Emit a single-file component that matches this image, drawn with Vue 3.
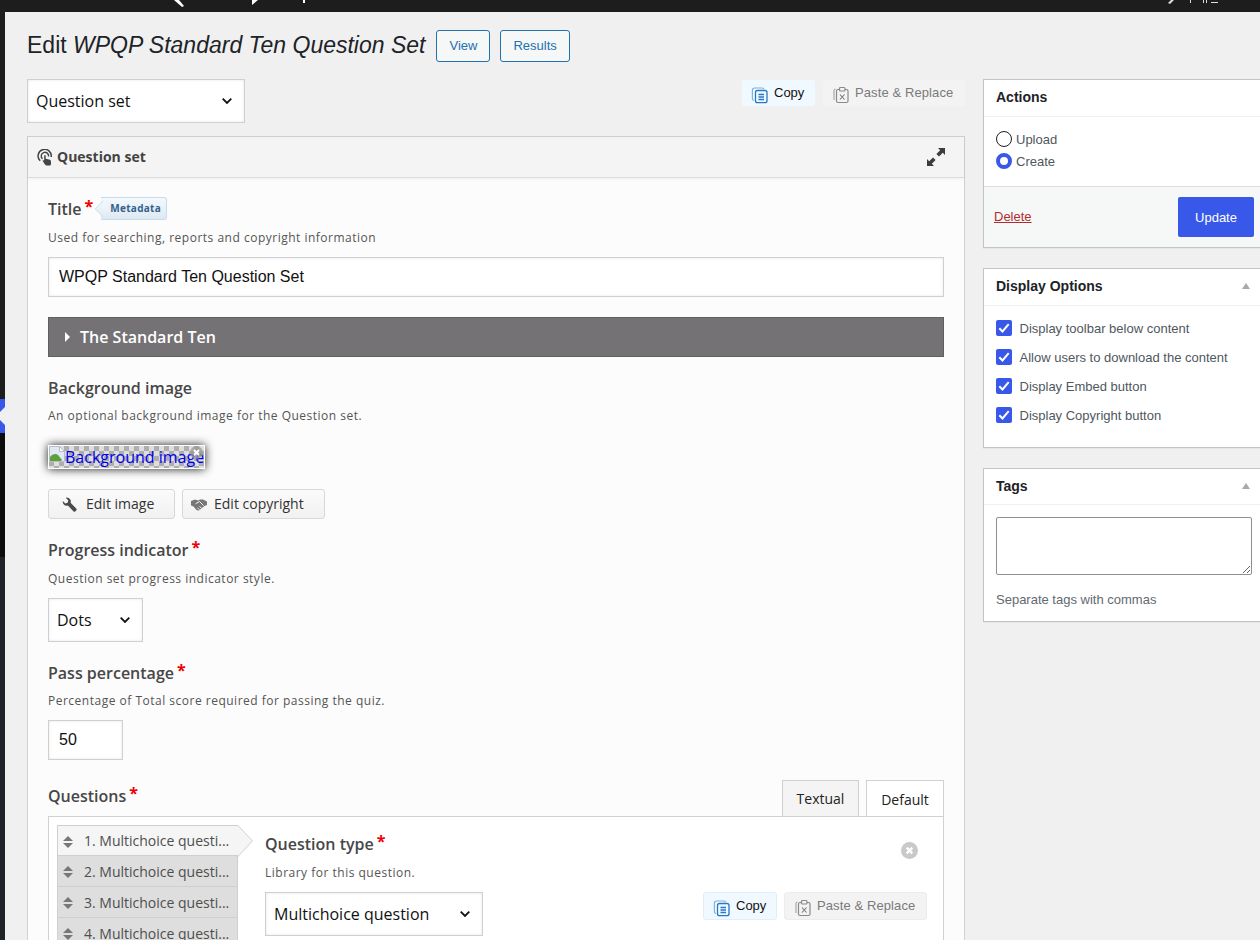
<script setup>
const options = [
  'Display toolbar below content',
  'Allow users to download the content',
  'Display Embed button',
  'Display Copyright button',
]
const questions = [1, 2, 3, 4].map((n) => n + '. Multichoice questi...')
</script>

<template>
  <div class="admin">
    <div class="topbar">
      <svg class="topbar-bits" width="1260" height="12" viewBox="0 0 1260 12">
        <path d="M174 0h5l5 6-2 1z" fill="#fff" />
        <path d="M252 0h6l-6 5z" fill="#fff" />
        <rect x="303" y="0" width="2" height="3" fill="#fff" />
        <path d="M1171 0h3l-4 4-2-1z" fill="#ddd" />
        <rect x="1190" y="0" width="1" height="3" fill="#ddd" />
        <rect x="1203" y="0" width="1" height="3" fill="#ddd" />
        <rect x="1206" y="0" width="1" height="3" fill="#ddd" />
        <rect x="1211" y="2" width="7" height="1" fill="#ddd" />
      </svg>
    </div>
    <div class="shell">
      <aside class="rail">
        <div class="rail-top"></div>
        <div class="rail-active"><span class="rail-notch"></span></div>
        <div class="rail-sub"></div>
      </aside>

      <main class="content">
        <header class="page-head">
          <h1>Edit <em>WPQP Standard Ten Question Set</em></h1>
          <a class="head-btn">View</a>
          <a class="head-btn">Results</a>
        </header>

        <div class="columns">
          <section class="editor">
            <div class="toolbar">
              <div class="sel sel-lib">
                <select class="select"><option>Question set</option></select>
                <svg class="chev" width="10" height="6" viewBox="0 0 10 6" fill="none"><path d="M.7.7L5 5l4.300-4.300" stroke="#111" stroke-width="1.800" /></svg>
              </div>
              <div class="clip-btns">
                <button class="btn-copy">
                  <svg width="18" height="18" viewBox="0 0 18 18" fill="none">
                    <path d="M3 14.500c-1-.3-1.600-1-1.600-2V4.200C1.400 2.800 2.400 2 3.600 2h7.500c.8 0 1.400.4 1.700 1" stroke="#7fb2dc" stroke-width="1.200" />
                    <rect x="4.500" y="4.500" width="11.500" height="12.200" rx="2" stroke="#2579c6" stroke-width="1.300" fill="#f0f9ff" />
                    <path d="M7.500 8.500h5.500M7.500 11h5.500M7.500 13.500h5.500" stroke="#2579c6" stroke-width="1.300" />
                  </svg>
                  <span>Copy</span>
                </button>
                <button class="btn-paste">
                  <svg width="18" height="18" viewBox="0 0 18 18" fill="none">
                    <path d="M2 14V4.500C2 3.500 2.700 3 3.500 3" stroke="#aaa" stroke-width="1.200" />
                    <rect x="4.500" y="3.500" width="11.500" height="13" rx="1.500" stroke="#8a8a8a" stroke-width="1.200" />
                    <rect x="7.500" y="1.500" width="5.500" height="3.500" rx="1" stroke="#8a8a8a" stroke-width="1.200" fill="#f3f3f3" />
                    <path d="M8 8.500l4.500 5M12.500 8.500l-4.500 5" stroke="#777" stroke-width="1.100" />
                  </svg>
                  <span>Paste &amp; Replace</span>
                </button>
              </div>
            </div>

            <div class="panel">
              <div class="panel-head">
                <svg width="16" height="17" viewBox="0 0 16 17" fill="none">
                  <path d="M3.200 11.800A6.600 6.600 0 1 1 14.200 8" stroke="#444" stroke-width="1.500" />
                  <path d="M5.500 9.800A3.700 3.700 0 1 1 11.600 7.500" stroke="#444" stroke-width="1.400" />
                  <path d="M7.200 6.800c0-1 1.500-1 1.500 0v3l3.300.7c1.300.3 2 1 2 2.200V15c0 .8-.5 1.500-1.300 1.500H9.500c-.6 0-1-.3-1.300-.8L5.800 12.300c-.5-.8.500-1.600 1.400-.8z" fill="#444" />
                </svg>
                <span class="panel-name">Question set</span>
                <svg class="expand" width="20" height="20" viewBox="0 0 20 20">
                  <path d="M12 1h7v7l-2.200-2.200-3.800 3.800-2.600-2.600 3.800-3.800z" fill="#3c3c3c" />
                  <path d="M8 19H1v-7l2.200 2.200 3.800-3.800 2.600 2.600-3.800 3.800z" fill="#3c3c3c" />
                </svg>
              </div>

              <div class="panel-body">
                <div class="field field-title">
                  <div class="label-row">
                    <label class="label">Title</label><span class="req">*</span>
                    <span class="meta-tag">Metadata</span>
                  </div>
                  <p class="desc desc-title">Used for searching, reports and copyright information</p>
                  <input class="input input-wide" value="WPQP Standard Ten Question Set" />
                </div>

                <div class="group-bar">
                  <span class="caret"></span>
                  The Standard Ten
                </div>

                <div class="field field-bg">
                  <label class="label">Background image</label>
                  <p class="desc">An optional background image for the Question set.</p>
                  <div class="thumb">
                    <svg class="broken" width="16" height="16" viewBox="0 0 16 16">
                      <path d="M0.500 0.500h10l5 5v10H.5z" fill="#dfe8f5" stroke="#b8bcc4" />
                      <path d="M1 15v-4c2-3 6-4 8-2l4 5-1 1z" fill="#5da03a" />
                      <path d="M10.500.5v5h5z" fill="#fff" stroke="#b8bcc4" />
                    </svg>
                    <span class="thumb-alt">Background image</span>
                    <svg class="thumb-x" width="13" height="13" viewBox="0 0 13 13">
                      <circle cx="6.500" cy="6.500" r="6.500" fill="#999" fill-opacity="0.75" />
                      <path d="M4 4l5 5M9 4l-5 5" stroke="#fff" stroke-width="1.800" />
                    </svg>
                  </div>
                  <div class="img-btns">
                    <button class="soft-btn btn-edit">
                      <svg width="15" height="15" viewBox="0 0 15 15">
                        <path transform="matrix(-1 0 0 1 15 0)" d="M10.200 .5a4 4 0 0 0-3.800 5.300L.8 11.400a1.400 1.400 0 0 0 0 2l.8.8a1.400 1.400 0 0 0 2 0l5.600-5.600A4 4 0 0 0 14.200 4l-2.500 2.400-2.300-.7-.7-2.300L11.200.7a4 4 0 0 0-1-.2z" fill="#4a4a4a" />
                      </svg>
                      <span>Edit image</span>
                    </button>
                    <button class="soft-btn btn-rights">
                      <svg width="16" height="13" viewBox="0 0 16 13" fill="none">
                        <path d="M0 3l4-1.500L7 2.500l2-1h3l4 2V7l-2.500 1-5 4c-1 .8-2 .5-3 0l-3-3.500L0 7.500z" fill="#777" />
                        <path d="M4.500 5.800l4-2.300 4 4M6.500 10l2 1.500M8.500 8.500l2 1.500" stroke="#fff" stroke-width="0.900" />
                      </svg>
                      <span>Edit copyright</span>
                    </button>
                  </div>
                </div>

                <div class="field field-progress">
                  <div class="label-row">
                    <label class="label">Progress indicator</label><span class="req">*</span>
                  </div>
                  <p class="desc desc-title">Question set progress indicator style.</p>
                  <div class="sel sel-dots">
                    <select class="select"><option>Dots</option></select>
                    <svg class="chev" width="10" height="6" viewBox="0 0 10 6" fill="none"><path d="M.7.7L5 5l4.300-4.300" stroke="#111" stroke-width="1.800" /></svg>
                  </div>
                </div>

                <div class="field field-pass">
                  <div class="label-row">
                    <label class="label">Pass percentage</label><span class="req">*</span>
                  </div>
                  <p class="desc">Percentage of Total score required for passing the quiz.</p>
                  <input class="input input-num" value="50" />
                </div>

                <div class="questions">
                  <div class="questions-head">
                    <div class="label-row">
                      <label class="label">Questions</label><span class="req">*</span>
                    </div>
                    <div class="tabs">
                      <span class="tab">Textual</span>
                      <span class="tab tab-on">Default</span>
                    </div>
                  </div>
                  <div class="q-box">
                    <ul class="q-list">
                      <li v-for="(q, i) in questions" :key="q" class="q-item" :class="{ 'q-on': i === 0 }">
                        <span class="q-sort"><i class="up"></i><i class="down"></i></span>
                        <span class="q-name">{{ q }}</span>
                      </li>
                    </ul>
                    <div class="q-form">
                      <div class="label-row">
                        <label class="label">Question type</label><span class="req">*</span>
                      </div>
                      <p class="desc desc-q">Library for this question.</p>
                      <div class="q-row">
                        <div class="sel sel-lib">
                          <select class="select"><option>Multichoice question</option></select>
                          <svg class="chev" width="10" height="6" viewBox="0 0 10 6" fill="none"><path d="M.7.7L5 5l4.300-4.300" stroke="#111" stroke-width="1.800" /></svg>
                        </div>
                        <div class="clip-btns clip-small">
                          <button class="btn-copy bordered">
                            <svg width="18" height="18" viewBox="0 0 18 18" fill="none">
                              <path d="M3 14.500c-1-.3-1.600-1-1.600-2V4.200C1.400 2.800 2.400 2 3.600 2h7.500c.8 0 1.400.4 1.700 1" stroke="#7fb2dc" stroke-width="1.200" />
                              <rect x="4.500" y="4.500" width="11.500" height="12.200" rx="2" stroke="#2579c6" stroke-width="1.300" fill="#f0f9ff" />
                              <path d="M7.500 8.500h5.500M7.500 11h5.500M7.500 13.500h5.500" stroke="#2579c6" stroke-width="1.300" />
                            </svg>
                            <span>Copy</span>
                          </button>
                          <button class="btn-paste bordered">
                            <svg width="18" height="18" viewBox="0 0 18 18" fill="none">
                              <path d="M2 14V4.500C2 3.500 2.700 3 3.500 3" stroke="#aaa" stroke-width="1.200" />
                              <rect x="4.500" y="3.500" width="11.500" height="13" rx="1.500" stroke="#8a8a8a" stroke-width="1.200" />
                              <rect x="7.500" y="1.500" width="5.500" height="3.500" rx="1" stroke="#8a8a8a" stroke-width="1.200" fill="#f3f3f3" />
                              <path d="M8 8.500l4.500 5M12.500 8.500l-4.500 5" stroke="#777" stroke-width="1.100" />
                            </svg>
                            <span>Paste &amp; Replace</span>
                          </button>
                        </div>
                      </div>
                      <span class="q-remove">
                        <svg width="17" height="17" viewBox="0 0 17 17">
                          <circle cx="8.500" cy="8.500" r="8.500" fill="#c9c9c9" />
                          <path d="M5.700 5.700l5.600 5.600M11.300 5.700l-5.600 5.600" stroke="#fff" stroke-width="2.400" />
                        </svg>
                      </span>
                    </div>
                  </div>
                </div>
              </div>
            </div>
          </section>

          <aside class="side">
            <div class="box box-actions">
              <h2 class="box-title">Actions</h2>
              <div class="radios">
                <label class="radio"><span class="dot"></span>Upload</label>
                <label class="radio"><span class="dot dot-on"></span>Create</label>
              </div>
              <div class="box-foot">
                <a class="delete">Delete</a>
                <button class="update">Update</button>
              </div>
            </div>

            <div class="box box-display">
              <h2 class="box-title">Display Options<span class="tri"></span></h2>
              <div class="checks">
                <label v-for="o in options" :key="o" class="check">
                  <span class="tick">
                    <svg width="12" height="10" viewBox="0 0 12 10" fill="none">
                      <path d="M1.300 5.200l3.200 3.300 6.200-7.300" stroke="#fff" stroke-width="2" />
                    </svg>
                  </span>
                  {{ o }}
                </label>
              </div>
            </div>

            <div class="box box-tags">
              <h2 class="box-title">Tags<span class="tri"></span></h2>
              <div class="tags-body">
                <textarea class="tags-input"></textarea>
                <p class="tags-hint">Separate tags with commas</p>
              </div>
            </div>
          </aside>
        </div>
      </main>
    </div>
  </div>
</template>

<style>
html,
body {
  margin: 0;
  overflow: hidden;
  background: #f0f0f1;
}
</style>

<style scoped>
* {
  box-sizing: border-box;
}
.admin {
  width: 1260px;
  height: 940px;
  overflow: hidden;
  font-family: "Liberation Sans", Arial, sans-serif;
  background: #f0f0f1;
  color: #3c434a;
  font-size: 13px;
}
.topbar {
  height: 12px;
  background: #1d1d1d;
}
.topbar-bits {
  display: block;
}
.shell {
  display: flex;
  height: 928px;
}
.rail {
  width: 5px;
  flex: none;
  display: flex;
  flex-direction: column;
  background: #1d2327;
}
.rail-top {
  height: 387px;
  background: #1d1d1d;
}
.rail-active {
  height: 34px;
  background: #3858e9;
  position: relative;
  overflow: hidden;
}
.rail-notch {
  position: absolute;
  inset: 0;
  background: #f0f0f1;
  clip-path: polygon(0 13px, 5px 8px, 5px 26px, 0 21px);
}
.rail-sub {
  height: 124px;
  background: #0c0c0c;
}
.content {
  flex: 1;
  padding-left: 22px;
  min-width: 0;
}
.page-head {
  display: flex;
  align-items: center;
  height: 32px;
  margin-top: 18px;
}
h1 {
  font-size: 23px;
  font-weight: 400;
  line-height: 30px;
  margin: 0 11px 2px 0;
  color: #1d2327;
}
.head-btn {
  height: 32px;
  line-height: 30px;
  padding: 0 12px;
  border: 1px solid #2271b1;
  border-radius: 3px;
  color: #2271b1;
  font-size: 13px;
  background: #f6f7f7;
  margin-right: 10px;
}
.columns {
  display: flex;
  gap: 18px;
  margin-top: 17px;
  align-items: flex-start;
}
.editor {
  width: 938px;
  flex: none;
}
.toolbar {
  display: flex;
  justify-content: space-between;
  align-items: flex-start;
  height: 57px;
}
.sel {
  position: relative;
  height: 44px;
  flex: none;
}
.sel-lib {
  width: 218px;
}
.sel-dots {
  width: 95px;
  margin-top: 10px;
}
.chev {
  position: absolute;
  right: 13px;
  top: 19px;
  pointer-events: none;
}
.select {
  appearance: none;
  width: 100%;
  height: 44px;
  font-family: "Open Sans", sans-serif;
  font-size: 16px;
  color: #111;
  background-color: #fff;
  border: 1px solid #d0d0d1;
  border-radius: 0;
  padding: 0 8px;
  box-shadow: inset 0 0 3px #e4e4e4;
  display: block;
}
.clip-btns {
  display: flex;
  gap: 8px;
  padding-top: 1px;
}
.btn-copy,
.btn-paste {
  display: flex;
  align-items: center;
  height: 26px;
  border: 0;
  border-radius: 3px;
  font-family: "Liberation Sans", Arial, sans-serif;
  font-size: 13px;
  padding: 0 9px;
  white-space: nowrap;
}
.btn-copy svg,
.btn-paste svg {
  flex: none;
  margin-top: 4px;
  margin-right: 5px;
}
.btn-copy span,
.btn-paste span {
  margin-bottom: 2px;
}
.btn-copy {
  width: 73px;
  background: #f0f9ff;
  color: #111;
}
.btn-paste {
  width: 142px;
  background: #f3f3f3;
  color: #7a7a7a;
  letter-spacing: 0.1px;
}
.clip-small {
  padding-top: 0;
  gap: 7px;
  margin-left: auto;
}
.bordered {
  height: 28px;
  border: 1px solid #e2eef5;
}
.btn-copy.bordered {
  width: 74px;
}
.btn-paste.bordered {
  width: 143px;
  border-color: #ececec;
}
.panel {
  border: 1px solid #d0d0d1;
  background: #fcfcfc;
}
.panel-head {
  height: 41px;
  display: flex;
  align-items: center;
  gap: 4px;
  padding: 0 18px 0 9px;
  background: #f4f4f4;
  border-bottom: 1px solid #dcdcdc;
  box-shadow: 0 1px 3px rgba(0, 0, 0, 0.06);
  font-family: "Open Sans", sans-serif;
  font-size: 14px;
  font-weight: 700;
  color: #434343;
}
.panel-name {
  margin-bottom: 2px;
}
.expand {
  margin-left: auto;
}
.panel-body {
  padding: 20px 20px 0;
}
.label-row {
  display: flex;
  align-items: flex-start;
}
.label {
  font-family: "Open Sans", sans-serif;
  font-size: 16px;
  font-weight: 600;
  line-height: 22px;
  color: #474747;
  display: block;
}
.req {
  color: #e00;
  font-family: "Open Sans", sans-serif;
  font-size: 16px;
  font-weight: 700;
  line-height: 22px;
  margin-left: 3px;
  margin-top: -3px;
}
.meta-tag {
  position: relative;
  isolation: isolate;
  margin-left: 8px;
  margin-top: -1px;
  width: 66px;
  height: 23px;
  line-height: 21px;
  padding-left: 9px;
  border: 1px solid #c6dcec;
  border-left: 0;
  border-radius: 0 3px 3px 0;
  background: linear-gradient(#f3f9fd, #dde9f2);
  font-family: "Open Sans", sans-serif;
  font-size: 10px;
  font-weight: 700;
  letter-spacing: 0.3px;
  color: #35618c;
}
.meta-tag::before {
  content: "";
  position: absolute;
  z-index: -1;
  left: -6px;
  top: 3px;
  width: 15px;
  height: 15px;
  background: linear-gradient(135deg, #f3f9fd, #e2ecf4);
  border-left: 1px solid #c6dcec;
  border-bottom: 1px solid #c6dcec;
  transform: rotate(45deg) scale(0.72);
}
.desc {
  margin: 8px 0 0;
  font-family: "Open Sans", sans-serif;
  font-size: 12px;
  line-height: 18px;
  letter-spacing: 0.5px;
  color: #555;
}
.desc-title {
  margin-top: 9px;
}
.input {
  display: block;
  height: 40px;
  border: 1px solid #d0d0d1;
  background: #fff;
  box-shadow: inset 0 0 3px #e4e4e4;
  font-size: 16px;
  padding: 0 10px;
  color: #111;
  font-family: "Liberation Sans", Arial, sans-serif;
  outline: none;
  border-radius: 0;
}
.input-wide {
  width: 100%;
  margin-top: 10px;
}
.input-num {
  width: 75px;
  margin-top: 10px;
}
.group-bar {
  margin-top: 20px;
  height: 40px;
  display: flex;
  align-items: center;
  background: #747275;
  border: 1px solid #5f5e61;
  color: #fff;
  font-family: "Open Sans", sans-serif;
  font-size: 16px;
  font-weight: 600;
  padding-left: 16px;
}
.caret {
  border-left: 5px solid #fff;
  border-top: 5px solid transparent;
  border-bottom: 5px solid transparent;
  margin-right: 10px;
}
.field-bg {
  margin-top: 20px;
}
.thumb {
  position: relative;
  width: 157px;
  height: 24px;
  margin-top: 20px;
  border: 1px solid #fff;
  box-shadow: 0 0 10px rgba(0, 0, 0, 0.9);
  background: repeating-conic-gradient(#aeaeae 0 25%, #dedede 0 50%) 0 0 / 10px 10px;
  overflow: hidden;
  display: flex;
  white-space: nowrap;
}
.broken {
  flex: none;
}
.thumb-alt {
  font-family: "Open Sans", sans-serif;
  font-size: 16px;
  line-height: 23px;
  color: #0000ee;
}
.thumb-x {
  position: absolute;
  right: 1px;
  top: 0;
}
.img-btns {
  display: flex;
  gap: 7px;
  margin-top: 20px;
}
.soft-btn {
  display: flex;
  align-items: center;
  height: 30px;
  border: 1px solid #d8d8d8;
  border-radius: 3px;
  background: linear-gradient(#fbfbfb, #f1f1f1);
  font-family: "Open Sans", sans-serif;
  font-size: 14px;
  color: #333;
  padding: 0;
}
.soft-btn span {
  margin-bottom: 1px;
}
.btn-edit {
  width: 127px;
  padding-left: 13px;
  gap: 9px;
}
.btn-rights {
  width: 143px;
  padding-left: 8px;
  gap: 7px;
}
.field-progress {
  margin-top: 20px;
}
.field-pass {
  margin-top: 20px;
}
.questions {
  margin-top: 19px;
}
.questions-head {
  display: flex;
  justify-content: space-between;
  align-items: flex-end;
  height: 37px;
}
.questions-head .label-row {
  align-self: flex-start;
  margin-top: 6px;
}
.tabs {
  display: flex;
  gap: 7px;
  align-items: flex-end;
  position: relative;
  top: 1px;
}
.tab {
  height: 37px;
  line-height: 36px;
  width: 77px;
  text-align: center;
  border: 1px solid #d0d0d1;
  border-bottom: 1px solid #d0d0d1;
  background: #f4f4f4;
  font-family: "Open Sans", sans-serif;
  font-size: 14px;
  color: #222;
}
.tab-on {
  height: 37px;
  width: 78px;
  line-height: 38px;
  background: #fff;
  border-bottom-color: #fff;
}
.q-box {
  position: relative;
  display: flex;
  border: 1px solid #d0d0d1;
  background: #fff;
  padding: 8px 16px 0 8px;
  height: 200px;
}
.q-list {
  list-style: none;
  margin: 0;
  padding: 0;
  width: 181px;
  flex: none;
  border-left: 1px solid #d0d0d1;
}
.q-item {
  position: relative;
  display: flex;
  align-items: center;
  height: 31px;
  width: 180px;
  background: #dedede;
  border-bottom: 1px solid #cfcfcf;
  border-right: 1px solid #cfcfcf;
  font-family: "Open Sans", sans-serif;
  font-size: 14px;
  color: #4e4e4e;
}
.q-on {
  background: #f5f5f5;
  border-top: 1px solid #d0d0d1;
  border-right: 0;
}
.q-on::after {
  content: "";
  position: absolute;
  right: -15px;
  top: -1px;
  width: 15px;
  height: 32px;
  background: #d0d0d1;
  clip-path: polygon(0 0, 100% 50%, 0 100%);
}
.q-on::before {
  content: "";
  position: absolute;
  right: -14px;
  top: 0;
  width: 14px;
  height: 30px;
  background: #f5f5f5;
  clip-path: polygon(0 0, 100% 50%, 0 100%);
  z-index: 1;
}
.q-sort {
  display: flex;
  flex-direction: column;
  gap: 2px;
  margin: 2px 0 0 5px;
  width: 21px;
}
.up,
.down {
  display: block;
  width: 0;
  border-left: 5px solid transparent;
  border-right: 5px solid transparent;
}
.up {
  border-bottom: 5px solid #777;
}
.down {
  border-top: 5px solid #777;
}
.q-name {
  white-space: nowrap;
}
.q-form {
  flex: 1;
  margin-left: 27px;
  padding-top: 8px;
}
.desc-q {
  margin-top: 9px;
}
.q-row {
  display: flex;
  margin-top: 10px;
  align-items: flex-start;
}
.q-remove {
  position: absolute;
  right: 25px;
  top: 25px;
  display: block;
  height: 17px;
}
.side {
  width: 280px;
  flex: none;
  display: flex;
  flex-direction: column;
  gap: 20px;
  margin-top: 0;
}
.box {
  background: #fff;
  border: 1px solid #c3c4c7;
  box-shadow: 0 1px 1px rgba(0, 0, 0, 0.04);
}
.box-title {
  position: relative;
  margin: 0;
  height: 37px;
  line-height: 34px;
  padding-left: 12px;
  font-size: 14px;
  font-weight: 700;
  color: #1d2327;
  border-bottom: 1px solid #f0f0f1;
}
.tri {
  position: absolute;
  right: 12px;
  top: 14px;
  border-left: 4px solid transparent;
  border-right: 4px solid transparent;
  border-bottom: 6px solid #a7aaad;
}
.box-actions {
  height: 169px;
  display: flex;
  flex-direction: column;
}
.radios {
  padding: 14px 12px 0;
  height: 69px;
}
.radio {
  display: flex;
  align-items: center;
  height: 16px;
  gap: 4px;
  margin-bottom: 6px;
  color: #50575e;
}
.dot {
  width: 16px;
  height: 16px;
  border: 1px solid #1e1e1e;
  border-radius: 50%;
  background: #fff;
}
.dot-on {
  border: 4.500px solid #3858e9;
}
.box-foot {
  display: flex;
  justify-content: space-between;
  align-items: center;
  flex: 1;
  background: #f6f7f7;
  border-top: 1px solid #dcdcde;
  padding: 0 8px 0 10px;
}
.delete {
  color: #b32d2e;
  text-decoration: underline;
  margin-bottom: 2px;
}
.update {
  width: 76px;
  height: 40px;
  border: 0;
  border-radius: 2px;
  background: #3858e9;
  color: #fff;
  font-family: "Liberation Sans", Arial, sans-serif;
  font-size: 13px;
}
.box-display {
  height: 180px;
}
.checks {
  padding: 14px 12px 0;
}
.check {
  display: flex;
  align-items: center;
  height: 16px;
  gap: 7.500px;
  margin-bottom: 13px;
  color: #50575e;
}
.tick {
  width: 16px;
  height: 16px;
  border-radius: 2px;
  background: #3858e9;
  display: flex;
  align-items: center;
  justify-content: center;
}
.box-tags {
  height: 154px;
}
.box-tags .box-title {
  height: 36px;
}
.tags-body {
  padding: 12px 8px 0 12px;
}
.tags-input {
  display: block;
  width: 256px;
  height: 58px;
  border: 1px solid #8c8f94;
  border-radius: 2px;
  background: #fff;
  margin: 0;
}
.tags-hint {
  margin: 16px 0 0;
  font-size: 13px;
  line-height: 18px;
  color: #646970;
}
</style>
